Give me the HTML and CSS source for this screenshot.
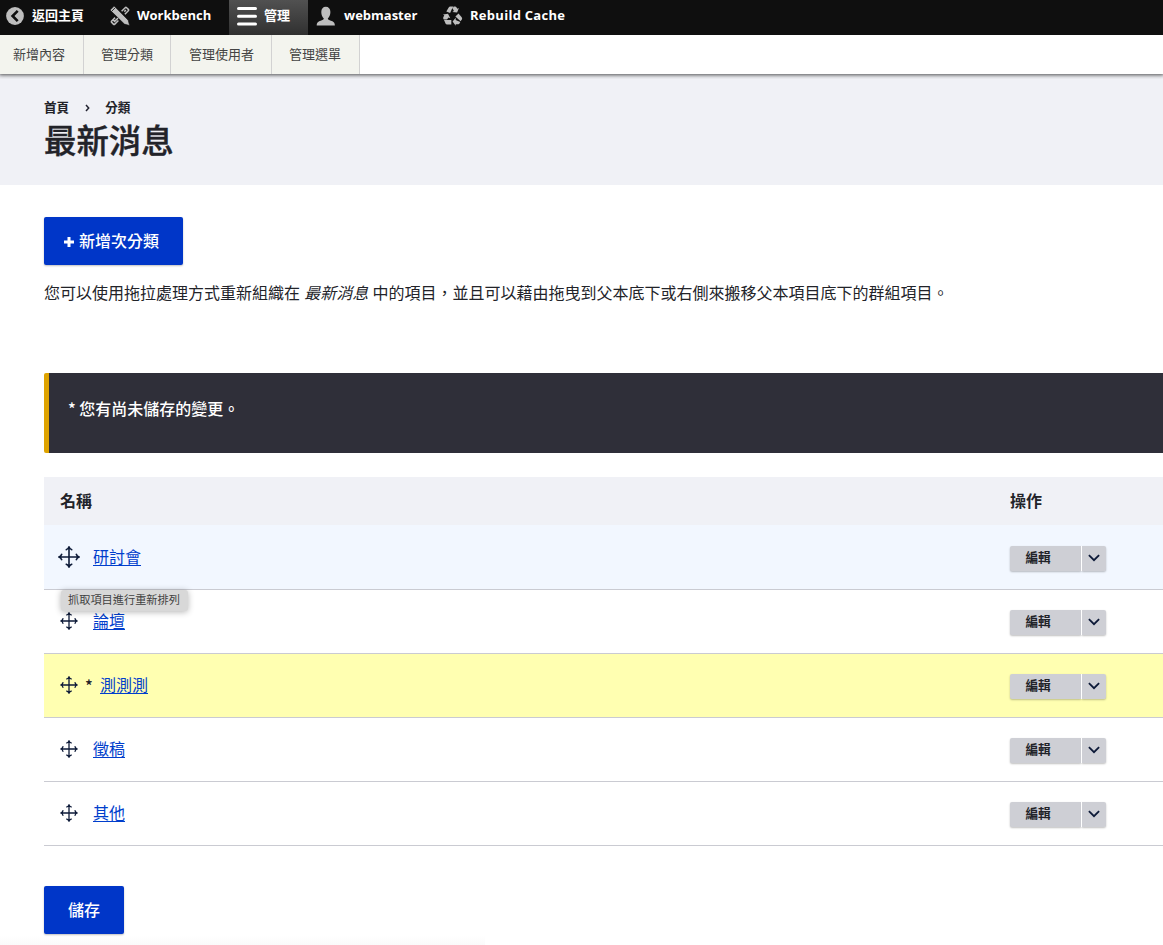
FILE: index.html
```html
<!DOCTYPE html>
<html lang="zh-Hant">
<head>
<meta charset="utf-8">
<title>最新消息</title>
<link rel="stylesheet" href="styles.css">
</head>
<body>
<svg class="sprites" width="0" height="0" aria-hidden="true">
  <symbol id="move" viewBox="0 0 18 18"><path d="M9 .8v16.4M.8 9h16.4M6.3 3.2C7.6 2.8 8.6 2 9 .9c.4 1.1 1.4 1.9 2.7 2.3M6.3 14.8c1.3.4 2.3 1.2 2.7 2.3.4-1.1 1.4-1.9 2.7-2.3M3.2 6.3C2.8 7.6 2 8.6.9 9c1.1.4 1.9 1.4 2.3 2.7M14.8 6.3c.4 1.3 1.2 2.3 2.3 2.7-1.1.4-1.9 1.4-2.3 2.7" fill="none" stroke="currentColor" stroke-width="1.3"/></symbol>
  <symbol id="chevron" viewBox="0 0 12 8"><path d="M.9 1.1 6 6.2l5.1-5.1" fill="none" stroke="currentColor" stroke-width="1.8"/></symbol>
</svg>
<nav class="toolbar">
  <a class="tab tab-home"><svg class="tab-icon" viewBox="0 0 20 20"><circle cx="10" cy="10" r="8.9" fill="#bebebe"/><path d="M12.7 4.9 7.6 10l5.1 5.1" fill="none" stroke="#0f0f0f" stroke-width="2.6"/></svg>返回主頁</a>
  <a class="tab tab-workbench"><svg class="tab-icon" viewBox="0 0 20 20"><path d="M11.6 5.3 15.2 1.7q.7-.7 1.4 0l1.7 1.7q.7.7 0 1.4l-3.4 3.4M14.3 5.6l1.6-1.6M8.4 11.7 4.6 15.4l-1.4-1.4M5.1 11.6l-3.4 3.4q-.7.7 0 1.4l1.7 1.7q.7.7 1.4 0l3.6-3.6" fill="none" stroke="#bebebe" stroke-width="1.5"/><path d="M.6 3.6 3.6.6q.6-.5 1.1 0L18.2 14.2l1.4 5.4-5.2-1.5L.6 4.6q-.5-.5 0-1z" fill="#bebebe" stroke="#0f0f0f" stroke-width=".6"/><path d="m1.8 5.2 3.3-3.3" stroke="#0f0f0f" stroke-width=".8"/></svg><span class="latin">Workbench</span></a>
  <a class="tab tab-manage"><svg class="tab-icon" viewBox="0 0 20 20"><path d="M1.5 2.5h17M1.5 10.3h17M1.5 18h17" stroke="#fff" stroke-width="3" stroke-linecap="round"/></svg>管理</a>
  <a class="tab tab-user"><svg class="tab-icon" viewBox="0 0 20 20"><path d="M.7 19.6c0-3.4 1.8-4.1 4-4.8 1.7-.6 3.1-1 3.1-2.2C6.3 11.3 5.3 9 5.3 6.1 5.3 2.7 7 .8 9.8.8s4.6 1.9 4.6 5.3c0 2.9-1.1 5.2-2.6 6.5 0 1.2 1.4 1.6 3.1 2.2 2.2.7 4 1.4 4 4.8z" fill="#bebebe"/></svg><span class="latin">webmaster</span></a>
  <a class="tab tab-cache"><svg class="tab-icon" viewBox="0 0 20 20" fill="#bebebe"><path d="M3.3 5.6 5.7 1.5C6.2.7 6.7.4 7.6.4h3L8.8 3.2 7.1 6.9z"/><path d="M11.2.4c1.5 0 2 .3 2.6 1.3l.6 1 1.5-.8-1.8 4.6-4.8-.6 1.6-1-1.5-2.8z"/><path d="m15.5 7.4 3.2 3.8c.6.9.5 1.6.1 2.3l-1.2 1.8-5.2-4.7z"/><path d="M17.3 15.9c-.6 1.2-1.3 2.4-2.6 2.4h-2v1.5l-3.1-4.2 3.1-3.9v2.2z"/><path d="M8.3 18.5H4.5c-1 0-1.5-.3-2-1.1L1 14h7.3z"/><path d="M.8 13.6c-.8-1.3-.9-2 0-3.4l.5-.8L0 8.6l5-.9 2.3 4.5-1.8-.8-1.5 2.2z"/></svg><span class="latin">Rebuild Cache</span></a>
</nav>
<nav class="tray">
  <a class="tray-link">新增內容</a>
  <a class="tray-link">管理分類</a>
  <a class="tray-link">管理使用者</a>
  <a class="tray-link">管理選單</a>
</nav>
<header class="page-header">
  <div class="breadcrumb"><span>首頁</span><svg class="crumb-arrow" viewBox="0 0 5 8"><path d="m1 1 2.7 3L1 7" fill="none" stroke="#222330" stroke-width="1.5"/></svg><span>分類</span></div>
  <h1 class="page-title">最新消息</h1>
</header>
<main class="content">
  <a class="button button-add"><svg class="plus" viewBox="0 0 10 10"><path d="M5 0v10M0 5h10" stroke="#fff" stroke-width="3"/></svg>新增次分類</a>
  <p class="help">您可以使用拖拉處理方式重新組織在 <em>最新消息</em> 中的項目，並且可以藉由拖曳到父本底下或右側來搬移父本項目底下的群組項目。</p>
  <div class="message">* 您有尚未儲存的變更。</div>
  <div class="table">
    <div class="row row-head"><span>名稱</span><span>操作</span></div>
    <div class="row row-hover">
      <div class="name"><span class="handle"><svg class="move move-large"><use href="#move"/></svg></span><a class="link">研討會</a><span class="tooltip">抓取項目進行重新排列</span></div>
      <div class="dropbutton"><span class="edit">編輯</span><span class="toggle"><svg class="chevron"><use href="#chevron"/></svg></span></div>
    </div>
    <div class="row">
      <div class="name"><span class="handle"><svg class="move"><use href="#move"/></svg></span><a class="link">論壇</a></div>
      <div class="dropbutton"><span class="edit">編輯</span><span class="toggle"><svg class="chevron"><use href="#chevron"/></svg></span></div>
    </div>
    <div class="row row-changed">
      <div class="name"><span class="handle"><svg class="move"><use href="#move"/></svg></span><span class="changed">*</span><a class="link">測測測</a></div>
      <div class="dropbutton"><span class="edit">編輯</span><span class="toggle"><svg class="chevron"><use href="#chevron"/></svg></span></div>
    </div>
    <div class="row">
      <div class="name"><span class="handle"><svg class="move"><use href="#move"/></svg></span><a class="link">徵稿</a></div>
      <div class="dropbutton"><span class="edit">編輯</span><span class="toggle"><svg class="chevron"><use href="#chevron"/></svg></span></div>
    </div>
    <div class="row">
      <div class="name"><span class="handle"><svg class="move"><use href="#move"/></svg></span><a class="link">其他</a></div>
      <div class="dropbutton"><span class="edit">編輯</span><span class="toggle"><svg class="chevron"><use href="#chevron"/></svg></span></div>
    </div>
  </div>
  <a class="button button-save">儲存</a>
</main>
</body>
</html>
```
FILE: styles.css
```css
* { box-sizing: border-box; }
body {
  margin: 0;
  height: 945px;
  overflow: hidden;
  background: linear-gradient(#fff, #fafafa) 0 100% / 485px 10px no-repeat #fff;
  color: #222329;
  font: 16px/24px "Noto Sans CJK TC", sans-serif;
}
svg { display: block; flex: none; }
.sprites { position: absolute; }
.toolbar {
  display: flex;
  height: 35px;
  background: #0f0f0f;
  color: #fff;
  font-size: 13px;
  font-weight: 700;
}
.tab {
  display: flex;
  align-items: center;
  gap: 7px;
  padding: 0 0 5px 8px;
  white-space: nowrap;
}
.tab-icon { width: 20px; height: 20px; margin-top: 1px; }
.tab-home { width: 102px; padding-left: 5px; }
.tab-workbench { width: 127px; }
.tab-manage { width: 79px; background: linear-gradient(#515151, #303030); }
.tab-user { width: 127px; gap: 8px; }
.tab-cache { width: 149px; letter-spacing: .28px; }
.latin { font-family: "Open Sans", sans-serif; }
.tray {
  display: flex;
  position: relative;
  height: 39px;
  background: #fff;
  box-shadow: 0 0 4px 1px rgba(0, 0, 0, .7);
  clip-path: inset(0 0 -5px 0);
  font-size: 13px;
  line-height: 38px;
  color: #444;
}
.tray-link {
  width: 88px;
  padding-left: 17px;
  background: #f3f4ee;
  border-right: 1px solid #d2d2d2;
}
.tray-link:nth-child(1) { width: 84px; padding-left: 13px; }
.tray-link:nth-child(2) { width: 87px; }
.tray-link:nth-child(3) { width: 101px; padding-left: 18px; }
.page-header {
  height: 111px;
  padding: 20px 44px 0;
  background: #f0f1f6;
}
.breadcrumb {
  display: flex;
  align-items: center;
  height: 26px;
  font-size: 12.6px;
  font-weight: 700;
}
.crumb-arrow { width: 5px; height: 8px; margin: 2px 15px 0 16px; }
.page-title {
  margin: 0;
  font-size: 32.4px;
  line-height: 37px;
  font-weight: 500;
  -webkit-text-stroke: .4px currentColor;
}
.content { padding: 32px 0 0 44px; }
.button {
  display: flex;
  align-items: center;
  height: 48px;
  padding-bottom: 2px;
  border-radius: 2px;
  background: #0036c8;
  box-shadow: 0 1px 2px rgba(0, 0, 0, .25);
  color: #fff;
  font-weight: 500;
}
.button-add { width: 139px; padding-left: 20px; gap: 5px; }
.button-save { width: 80px; margin-top: 40px; justify-content: center; }
.plus { width: 10px; height: 10px; margin-top: 4px; }
.help { margin: 15px 0 69px; white-space: nowrap; }
.help em { margin: 0 .6px; }
.message {
  height: 80px;
  padding: 23px 19px;
  border-left: 5px solid #dea300;
  border-radius: 2px 0 0 2px;
  background: #2f2f39;
  color: #fff;
  font-weight: 500;
}
.table { margin-top: 24px; }
.row {
  display: grid;
  grid-template-columns: 950px 1fr;
  align-items: center;
  height: 64px;
  padding-left: 16px;
  border-bottom: 1px solid #cacbd2;
}
.row-head {
  height: 48px;
  padding-bottom: 2px;
  border: 0;
  background: #f0f1f6;
  font-weight: 700;
}
.row-hover { height: 65px; background: #f2f7ff; }
.row-changed { background: #ffffb1; }
.name { display: flex; align-items: center; position: relative; margin-top: -3px; }
.handle { display: flex; justify-content: center; width: 17px; margin: 2px 16px 0 0; }
.move { width: 18px; height: 18px; color: #0d1a38; }
.move-large { width: 22px; height: 22px; margin: 0 -3px; }
.link {
  color: #003ecc;
  text-decoration: underline;
  text-decoration-thickness: 1px;
  text-underline-offset: 2px;
}
.changed { width: 15px; margin: 2px 0 0 -8px; font-weight: 500; }
.tooltip {
  position: absolute;
  z-index: 2;
  left: 1px;
  top: 46px;
  width: 127px;
  height: 21px;
  border-radius: 3px;
  background: #d8d8d8;
  box-shadow: 0 1px 6px rgba(0, 0, 0, .3);
  color: #414141;
  font-size: 11.2px;
  line-height: 19px;
  padding-right: 1px;
  text-align: center;
  white-space: nowrap;
}
.dropbutton {
  display: flex;
  width: 96px;
  height: 25px;
  margin-top: 1px;
  gap: 1px;
}
.row-hover .dropbutton { margin-top: 2px; }
.edit, .toggle {
  background: #cecfd5;
  box-shadow: 0 1px 2px rgba(0, 0, 0, .25);
}
.edit {
  width: 71px;
  padding-left: 15.5px;
  border-radius: 2px 0 0 2px;
  font-size: 12.6px;
  line-height: 22px;
  font-weight: 700;
}
.toggle {
  display: flex;
  align-items: center;
  justify-content: center;
  width: 24px;
  border-radius: 0 2px 2px 0;
  box-shadow: -1px 0 0 #fff, 0 1px 2px rgba(0, 0, 0, .25);
}
.chevron { width: 12px; height: 8px; color: #0d1a38; }
```
